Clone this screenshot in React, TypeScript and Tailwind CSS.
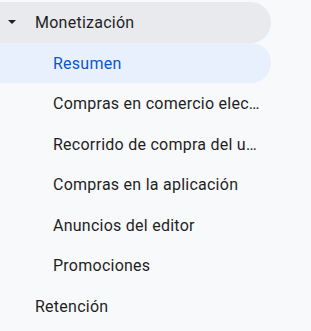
const subItems = [
  "Resumen",
  "Compras en comercio electrónico",
  "Recorrido de compra del usuario",
  "Compras en la aplicación",
  "Anuncios del editor",
  "Promociones",
];

export default function App() {
  return (
    <div
      className="w-[311px] h-[331px] bg-[#f8f9fb] pt-[2px] overflow-hidden text-[#1f1f1f] tracking-[0.25px]"
      style={{ fontFamily: "Roboto, 'Noto Sans', sans-serif" }}
    >
      <div className="w-[271px] flex flex-col">
        <div className="h-[40.5px] flex items-center bg-[#e8eaed] rounded-r-full">
          <svg className="w-[8px] h-[4px] ml-[8px] mr-[19px]" viewBox="0 0 8 4">
            <polygon points="0,0 8,0 4,4" fill="#1f1f1f" />
          </svg>
          <span className="text-[16px] pt-[2px]">Monetización</span>
        </div>
        {subItems.map((label, i) => (
          <div
            key={label}
            className={
              i === 0
                ? "h-[40.5px] flex items-center pl-[53px] pr-2 pt-[2px] bg-[#e8f0fe] rounded-r-full text-[#0b57d0]"
                : "h-[40.5px] flex items-center pl-[53px] pr-2 pt-[2px]"
            }
          >
            <span className="text-[16px] truncate">{label}</span>
          </div>
        ))}
        <div className="h-[40.5px] flex items-center pl-[35px] pt-[2px]">
          <span className="text-[16px]">Retención</span>
        </div>
      </div>
    </div>
  );
}
